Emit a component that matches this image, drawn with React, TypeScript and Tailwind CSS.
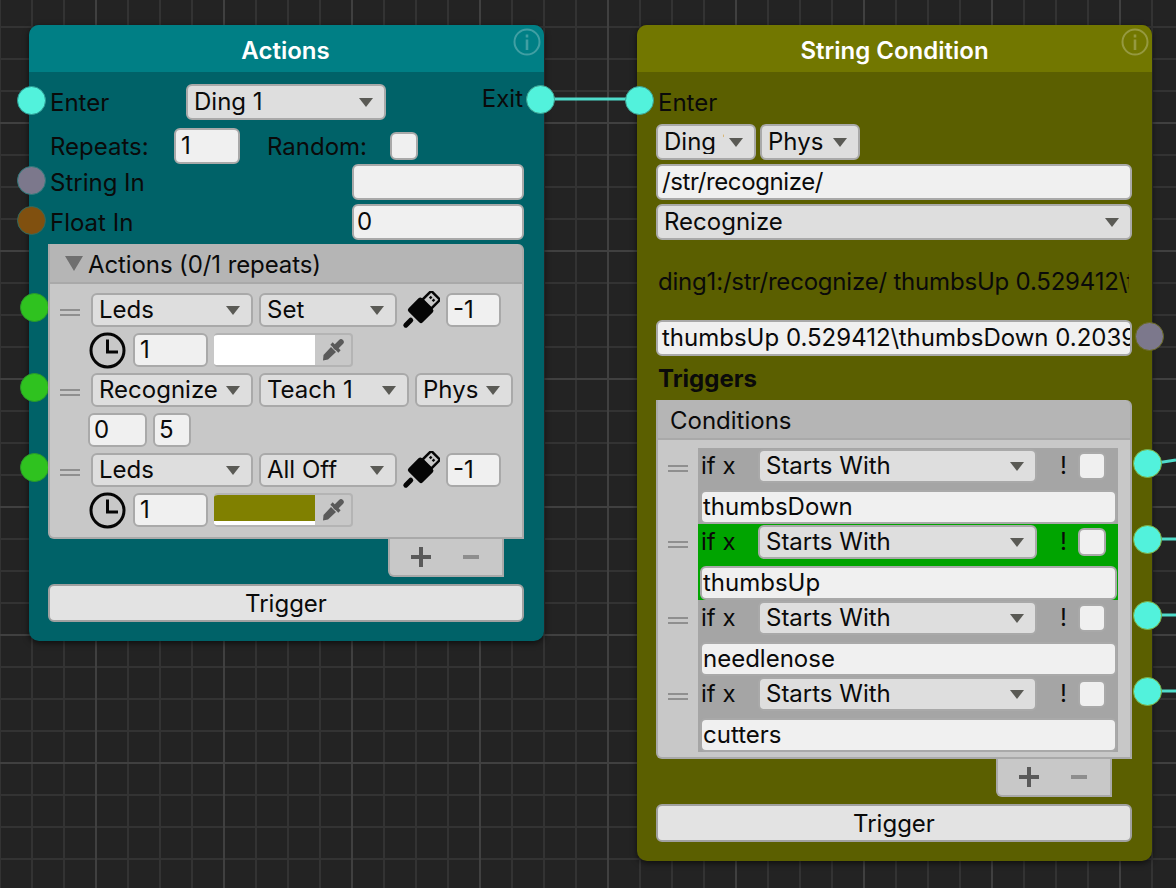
import React from "react";

const Arrow = () => (
  <svg width="14" height="9" viewBox="0 0 14 9" className="shrink-0">
    <polygon points="0,0 14,0 7,9" fill="#5a5a55" />
  </svg>
);

function Select({ label, className = "", clip = false }: { label: string; className?: string; clip?: boolean }) {
  return (
    <div className={`flex items-center justify-between shrink-0 bg-[#dedede] border-2 border-[#a9a9a9] rounded-[6px] pl-[6px] pr-[11px] ${className}`}>
      <span className={clip ? "block w-[60px] overflow-hidden whitespace-nowrap" : "whitespace-nowrap"}>{label}</span>
      <Arrow />
    </div>
  );
}

function Input({ value = "", className = "" }: { value?: string; className?: string }) {
  return (
    <div className={`flex items-center shrink-0 overflow-hidden whitespace-nowrap bg-[#f0f0f0] border-2 border-[#a9a9a9] rounded-[6px] ${className}`}>
      {value}
    </div>
  );
}

function Pin({ color, className = "" }: { color: string; className?: string }) {
  return <div className={`absolute w-[29px] h-[29px] rounded-full border-[1.5px] ${color} ${className}`} />;
}

const Handle = ({ className = "" }: { className?: string }) => (
  <div className={`w-[20px] h-[7px] border-y-2 border-[#8f8f8f] ${className}`} />
);

const Clock = () => (
  <svg width="37" height="37" viewBox="0 0 37 37" className="shrink-0 -ml-[2px]">
    <circle cx="18.5" cy="18.5" r="16.5" fill="none" stroke="#050505" strokeWidth="3" />
    <path d="M18.5 7.5V20H29" fill="none" stroke="#050505" strokeWidth="3" />
  </svg>
);

const Usb = () => (
  <svg width="38" height="38" viewBox="0 0 38 38" className="shrink-0">
    <g transform="rotate(45 19 19)">
      <rect x="11.5" y="-3" width="15" height="15" rx="2" fill="#050505" />
      <rect x="14" y="-0.5" width="10" height="10" fill="#c8c8c8" />
      <rect x="15.8" y="2" width="2.4" height="2.6" fill="#050505" />
      <rect x="19.8" y="2" width="2.4" height="2.6" fill="#050505" />
      <rect x="9" y="10" width="20" height="19" rx="2.5" fill="#050505" />
      <rect x="16.5" y="31" width="5" height="12" rx="2.5" fill="#050505" />
    </g>
  </svg>
);

const Dropper = () => (
  <svg width="22" height="22" viewBox="0 0 22 22">
    <path d="M9 8 14 13 6 20.5 1 21.5 1.5 16Z" fill="#5a5a5a" />
    <path d="M9.5 4.5 17.5 12.5" stroke="#5a5a5a" strokeWidth="3.2" fill="none" />
    <path d="M14 8 19 3" stroke="#5a5a5a" strokeWidth="5.5" strokeLinecap="round" fill="none" />
  </svg>
);

const Info = () => (
  <svg width="28" height="28" viewBox="0 0 28 28" className="absolute top-[3px] right-[3px] opacity-25">
    <circle cx="14" cy="14" r="12.5" fill="none" stroke="#fff" strokeWidth="2" />
    <rect x="12.7" y="11.5" width="2.6" height="10.5" fill="#fff" />
    <rect x="12.7" y="6.5" width="2.6" height="3" fill="#fff" />
  </svg>
);

function ColorField({ olive = false }: { olive?: boolean }) {
  return (
    <div className="flex w-[139px] h-[34px] shrink-0 border-2 border-l-0 border-[#b4b4b4] rounded-[4px] ml-[6px] overflow-hidden">
      <div className="w-[101px] h-full bg-white flex flex-col">
        {olive && <div className="h-[26px] bg-[#808000]" />}
      </div>
      <div className="flex-1 flex items-center justify-center">
        <Dropper />
      </div>
    </div>
  );
}

function Footer({ className = "" }: { className?: string }) {
  return (
    <div className={`w-[116px] h-[38px] shrink-0 bg-[#c8c8c8] border-2 border-t-0 border-[#a9a9a9] rounded-bl-[6px] ml-auto flex items-center ${className}`}>
      <svg width="20" height="20" viewBox="0 0 20 20" className="ml-[21px]">
        <path d="M0 10H20M10 0V20" stroke="#5a5a5a" strokeWidth="4" />
      </svg>
      <svg width="16" height="4" viewBox="0 0 16 4" className="ml-[32px]">
        <rect width="16" height="4" fill="#8e8e8e" />
      </svg>
    </div>
  );
}

const ACTION_ITEM = "flex h-[34px] items-center";

function ActionsNode() {
  return (
    <div className="absolute left-[29px] top-[25px] w-[515px] h-[616px] rounded-[10px] bg-[#006268] shadow-[0_2px_6px_rgba(0,0,0,0.6)]">
      <div className="relative h-[47px] bg-[#007f85] rounded-t-[10px] flex items-center justify-center text-white font-semibold pr-[2px] pt-[4px]">
        Actions
        <Info />
      </div>

      <Pin color="bg-[#52f2dc] border-[#2f9a94]" className="left-[-12px] top-[61px]" />
      <Pin color="bg-[#52f2dc] border-[#3f9f90]" className="right-[-11px] top-[60px]" />
      <Pin color="bg-[#7c788c] border-[#2f7a7c]" className="left-[-12px] top-[141px]" />
      <Pin color="bg-[#80500f] border-[#2f6a60]" className="left-[-12px] top-[181px]" />
      <Pin color="bg-[#2fc21f] border-[#2a9a2a]" className="left-[-9px] top-[268px]" />
      <Pin color="bg-[#2fc21f] border-[#2a9a2a]" className="left-[-9px] top-[348px]" />
      <Pin color="bg-[#2fc21f] border-[#2a9a2a]" className="left-[-9px] top-[428px]" />

      <div className="pl-[19px] pr-[20px] pt-[12px] flex flex-col">
        <div className="flex h-[36px] items-center -ml-[19px] -mr-[20px] pl-[21px] pr-[21px]">
          <span className="w-[136px] pt-[2px]">Enter</span>
          <Select label="Ding 1" className="w-[200px] h-[36px]" />
          <span className="ml-auto self-start mt-[3px]">Exit</span>
        </div>
        <div className="flex h-[36px] items-center mt-[8px] pl-[2px]">
          <span className="w-[124px] pt-[2px]">Repeats:</span>
          <Input value="1" className="w-[66px] h-[36px] pl-[5px]" />
          <span className="ml-[27px] w-[123px] pt-[2px]">Random:</span>
          <Input className="w-[28px] h-[28px]" />
        </div>
        <div className="flex h-[36px] items-center pl-[2px]">
          <span className="pt-[2px]">String In</span>
          <Input className="w-[172px] h-[36px] ml-auto" />
        </div>
        <div className="flex h-[36px] items-center mt-[4px] pl-[2px]">
          <span className="pt-[2px]">Float In</span>
          <Input value="0" className="w-[172px] h-[36px] ml-auto pl-[3px]" />
        </div>

        <div className="flex h-[40px] items-center mt-[4px] bg-[#b5b5b5] border-2 border-t-0 border-[#a9a9a9] rounded-tr-[6px] pl-[15px]">
          <svg width="18" height="15" viewBox="0 0 18 15">
            <polygon points="0,0 18,0 9,15" fill="#6f6f6f" />
          </svg>
          <span className="ml-[5px] pt-[4px] tracking-[-0.1px]">Actions (0/1 repeats)</span>
        </div>

        <div className="h-[255px] bg-[#c8c8c8] border-2 border-t-0 border-[#a9a9a9] rounded-bl-[6px] pt-[9px] pl-[41px] relative flex flex-col gap-[6px]">
          <Handle className="absolute left-[10px] top-[25px]" />
          <div className={ACTION_ITEM}>
            <Select label="Leds" className="w-[162px] h-[34px]" />
            <Select label="Set" className="w-[138px] h-[34px] ml-[6px]" />
            <div className="ml-[5px]"><Usb /></div>
            <Input value="-1" className="w-[55px] h-[34px] ml-[6px] pl-[5px]" />
          </div>
          <div className={ACTION_ITEM}>
            <Clock />
            <Input value="1" className="w-[75px] h-[34px] ml-[7px] pl-[5px]" />
            <ColorField />
          </div>
          <Handle className="absolute left-[10px] top-[105px]" />
          <div className={ACTION_ITEM}>
            <Select label="Recognize" className="w-[162px] h-[34px]" />
            <Select label="Teach 1" className="w-[150px] h-[34px] ml-[6px]" />
            <Select label="Phys" className="w-[98px] h-[34px] ml-[6px]" />
          </div>
          <div className={`${ACTION_ITEM} -ml-[3px]`}>
            <Input value="0" className="w-[59px] h-[34px] pl-[4px]" />
            <Input value="5" className="w-[38px] h-[34px] ml-[6px] pl-[4px]" />
          </div>
          <Handle className="absolute left-[10px] top-[185px]" />
          <div className={ACTION_ITEM}>
            <Select label="Leds" className="w-[162px] h-[34px]" />
            <Select label="All Off" className="w-[138px] h-[34px] ml-[6px]" />
            <div className="ml-[5px]"><Usb /></div>
            <Input value="-1" className="w-[55px] h-[34px] ml-[6px] pl-[5px]" />
          </div>
          <div className={ACTION_ITEM}>
            <Clock />
            <Input value="1" className="w-[75px] h-[34px] ml-[7px] pl-[5px]" />
            <ColorField olive />
          </div>
        </div>

        <Footer className="mr-[20px]" />

        <div className="flex items-center justify-center h-[38px] mt-[7px] pt-[2px] bg-[#e3e3e3] border-2 border-[#a0a0a0] rounded-[6px]">Trigger</div>
      </div>
    </div>
  );
}

function CondRow({ text, green = false }: { text: string; green?: boolean }) {
  return (
    <div className={`h-[76px] w-[420px] pt-[1px] flex flex-col ${green ? "bg-[#00a400]" : "bg-[#a5a5a5]"}`}>
      <div className="flex h-[34px] items-center pl-[3px]">
        <span className="w-[57px]">if x</span>
        <Select label="Starts With" className="w-[279px] h-[34px]" />
        <span className="ml-[23px] w-[18px]">!</span>
        <Input className="w-[28px] h-[28px]" />
      </div>
      <Input value={text} className="ml-[2px] mt-[7px] w-[417px] h-[34px] pl-[1px]" />
    </div>
  );
}

function ConditionNode() {
  return (
    <div className="absolute left-[637px] top-[25px] w-[515px] h-[836px] rounded-[10px] bg-[#5b5f00] shadow-[0_2px_6px_rgba(0,0,0,0.6)]">
      <div className="relative h-[47px] bg-[#727700] rounded-t-[10px] flex items-center justify-center text-white font-semibold pt-[4px]">
        String Condition
        <Info />
      </div>

      <Pin color="bg-[#52f2dc] border-[#3f9f90]" className="left-[-12px] top-[61px]" />
      <Pin color="bg-[#7c788c] border-[#6a6a20]" className="right-[-12px] top-[297px]" />
      <Pin color="bg-[#52f2dc] border-[#7fae40]" className="right-[-10px] top-[424px]" />
      <Pin color="bg-[#52f2dc] border-[#7fae40]" className="right-[-10px] top-[500px]" />
      <Pin color="bg-[#52f2dc] border-[#7fae40]" className="right-[-10px] top-[576px]" />
      <Pin color="bg-[#52f2dc] border-[#7fae40]" className="right-[-10px] top-[652px]" />

      <div className="pl-[19px] pr-[20px] pt-[12px] flex flex-col">
        <div className="flex h-[36px] items-center pl-[2px] pt-[2px]">Enter</div>
        <div className="flex h-[36px] mt-[4px] gap-[4px]">
          <Select label="Ding 1" clip className="w-[100px] h-[36px]" />
          <Select label="Phys" className="w-[100px] h-[36px]" />
        </div>
        <Input value="/str/recognize/" className="h-[36px] mt-[4px] pl-[4px] tracking-[-0.4px]" />
        <Select label="Recognize" className="h-[36px] mt-[4px]" />
        <div className="h-[36px] mt-[24px] pl-[2px] w-[473px] overflow-hidden whitespace-nowrap flex items-center tracking-[-0.2px]">
          ding1:/str/recognize/ thumbsUp 0.529412\thumbsDown 0.203922
        </div>
        <Input value="thumbsUp 0.529412\thumbsDown 0.203922" className="h-[36px] mt-[20px] pl-[4px]" />
        <div className="h-[36px] mt-[5px] flex items-center pl-[2px] font-bold">Triggers</div>
        <div className="flex h-[40px] items-center mt-[3px] pt-[4px] bg-[#b5b5b5] border-2 border-t-0 border-[#a9a9a9] rounded-tr-[6px] pl-[12px]">Conditions</div>
        <div className="h-[319px] bg-[#c8c8c8] border-2 border-t-0 border-[#a9a9a9] rounded-bl-[6px] pt-[8px] pl-[40px] relative">
          <Handle className="absolute left-[10px] top-[25px]" />
          <Handle className="absolute left-[10px] top-[101px]" />
          <Handle className="absolute left-[10px] top-[177px]" />
          <Handle className="absolute left-[10px] top-[253px]" />
          <CondRow text="thumbsDown" />
          <CondRow text="thumbsUp" green />
          <CondRow text="needlenose" />
          <CondRow text="cutters" />
        </div>
        <Footer className="mr-[20px]" />
        <div className="flex items-center justify-center h-[38px] mt-[7px] pt-[2px] bg-[#e3e3e3] border-2 border-[#a0a0a0] rounded-[6px]">Trigger</div>
      </div>
    </div>
  );
}

export default function App() {
  return (
    <div className="relative w-[1176px] h-[888px] overflow-hidden text-[24px] leading-none text-[#0a0a0a] font-['Inter',sans-serif] bg-[#232323] bg-[linear-gradient(#404040_2px,transparent_2px),linear-gradient(90deg,#404040_2px,transparent_2px),linear-gradient(#333333_2px,transparent_2px),linear-gradient(90deg,#333333_2px,transparent_2px)] [background-size:128px_128px,128px_128px,32px_32px,32px_32px] [background-position:0_122px,95px_0,0_26px,31px_0]">
      <svg width="1176" height="888" className="absolute inset-0">
        <g stroke="#4fdccb" strokeWidth="3" fill="none">
          <path d="M540 99H640" />
          <path d="M1150 464 1176 460" />
          <path d="M1150 539H1176" />
          <path d="M1150 615H1176" />
          <path d="M1150 691H1176" />
        </g>
      </svg>
      <ActionsNode />
      <ConditionNode />
    </div>
  );
}
